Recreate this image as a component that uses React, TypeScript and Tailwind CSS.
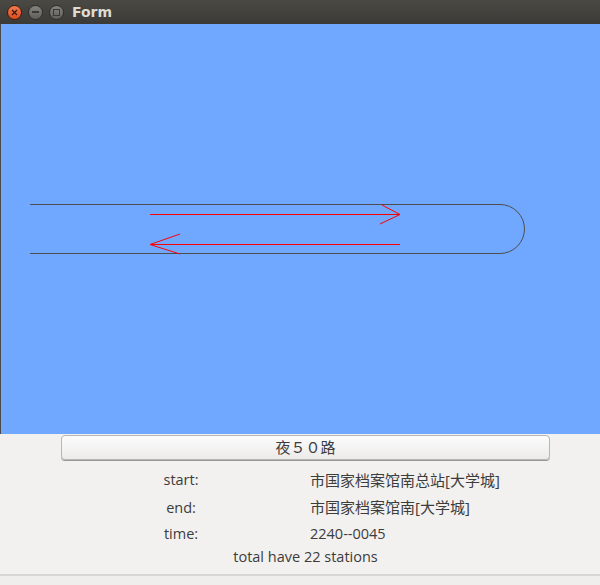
export default function App() {
  return (
    <div className="w-[600px] h-[585px] flex flex-col bg-[#f2f1f0] overflow-hidden" style={{ fontFamily: '"Open Sans", "Noto Sans CJK SC", sans-serif' }}>
      {/* title bar */}
      <div className="h-[24px] flex items-center bg-gradient-to-b from-[#4a4944] to-[#3b3a36] px-[7px] gap-[6px]">
        <span className="w-[15px] h-[15px] rounded-full bg-gradient-to-b from-[#f27a50] to-[#df4a16] border border-[#3a1c10] flex items-center justify-center">
          <svg width="7" height="7" viewBox="0 0 7 7"><path d="M1 1L6 6M6 1L1 6" stroke="#3a1a0f" strokeWidth="1.3" /></svg>
        </span>
        <span className="w-[15px] h-[15px] rounded-full bg-gradient-to-b from-[#85847f] to-[#5f5e5a] border border-[#2e2d2a] flex items-center justify-center">
          <span className="w-[7px] h-[2px] bg-[#3a3935]" />
        </span>
        <span className="w-[15px] h-[15px] rounded-full bg-gradient-to-b from-[#85847f] to-[#5f5e5a] border border-[#2e2d2a] flex items-center justify-center">
          <span className="w-[7px] h-[7px] border-[1.5px] border-[#3a3935]" />
        </span>
        <span className="ml-[2px] text-[14px] font-bold text-[#dfdbd2]" style={{ fontFamily: '"DejaVu Sans", sans-serif' }}>Form</span>
      </div>

      {/* canvas */}
      <div className="h-[410px] bg-[#70a7ff] border-l border-[#4a4a4a]">
        <svg width="599" height="410" viewBox="1 0 599 410">
          <path d="M30 180.5H500A24.5 24.5 0 0 1 500 229.5H30" fill="none" stroke="#4d4d4d" strokeWidth="1" />
          <path d="M150 190.5H400M382 181L400 190.5L380 200" fill="none" stroke="#ff0000" strokeWidth="1" />
          <path d="M150 220.5H400M180 210L150 220.5L180 230" fill="none" stroke="#ff0000" strokeWidth="1" />
        </svg>
      </div>

      {/* form */}
      <div className="flex flex-col pl-[61px] pr-[50px] pt-[1px] text-[14.5px] text-[#3c3c3c]">
        <button className="h-[25px] w-full rounded-[4px] border border-[#b8b6b2] bg-gradient-to-b from-[#fcfcfc] to-[#ecebea] text-[15px] text-[#3c3c3c] shadow-[0_1px_0_#9a9894]">
          夜５０路
        </button>
        <div className="grid grid-cols-[240px_1fr] mt-[6px]">
          <div className="h-[28px] flex items-center justify-center">start:</div>
          <div className="h-[28px] flex items-center pl-[9px] text-[15px]">市国家档案馆南总站[大学城]</div>
          <div className="h-[27px] flex items-center justify-center">end:</div>
          <div className="h-[27px] flex items-center pl-[9px] text-[15px]">市国家档案馆南[大学城]</div>
          <div className="h-[25px] flex items-center justify-center">time:</div>
          <div className="h-[25px] flex items-center pl-[9px]">2240--0045</div>
        </div>
        <div className="h-[22px] flex items-center justify-center">total have 22 stations</div>
      </div>
      <div className="mt-auto h-[11px] border-t-2 border-[#d8d7d5] bg-[#efeeed]" />
    </div>
  );
}
